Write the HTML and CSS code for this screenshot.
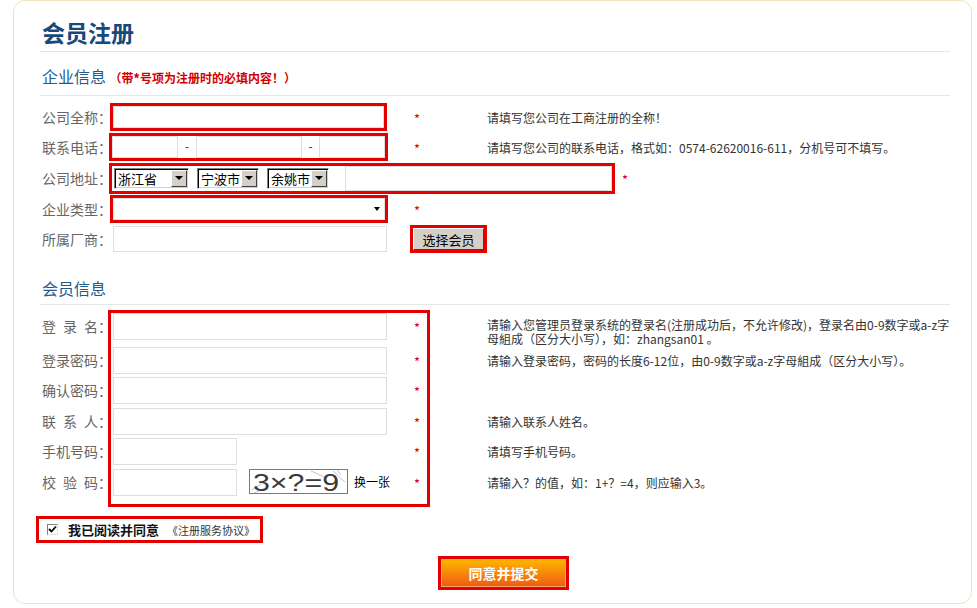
FILE: index.html
```html
<!DOCTYPE html>
<html lang="zh-CN">
<head>
    <meta charset="UTF-8" />
    <meta name="viewport" content="width=device-width, initial-scale=1.0" />
    <title>会员注册</title>
    <link rel="stylesheet" href="styles.css">
</head>
<body>

    <div class="reg-box">
        <h1 class="reg-title">会员注册</h1>

        <!-- 企业信息 -->
        <h2 class="sec-title">企业信息 <span class="sec-note">（带<b>*</b>号项为注册时的必填内容！）</span></h2>

        <div class="form-rows">
            <div class="form-row">
                <label class="lbl">公司全称：</label>
                <div class="field">
                    <div class="hl hl-name"><input type="text" class="txt grow" /></div>
                </div>
                <div class="req"><span class="star">*</span></div>
                <div class="tip">请填写您公司在工商注册的全称！</div>
            </div>

            <div class="form-row">
                <label class="lbl">联系电话：</label>
                <div class="field">
                    <div class="hl hl-phone">
                        <input type="text" class="txt ph-a" />
                        <span class="dash">-</span>
                        <input type="text" class="txt ph-b" />
                        <span class="dash dash-b">-</span>
                        <input type="text" class="txt ph-c" />
                    </div>
                </div>
                <div class="req"><span class="star">*</span></div>
                <div class="tip">请填写您公司的联系电话，格式如：0574-62620016-611，分机号可不填写。</div>
            </div>

            <div class="form-row tall">
                <label class="lbl">公司地址：</label>
                <div class="field field-wide">
                    <div class="hl hl-addr">
                        <div class="sel sel-prov"><span>浙江省</span><i class="sel-btn"></i></div>
                        <div class="sel"><span>宁波市</span><i class="sel-btn"></i></div>
                        <div class="sel"><span>余姚市</span><i class="sel-btn"></i></div>
                        <input type="text" class="txt addr" />
                    </div>
                    <span class="star">*</span>
                </div>
            </div>

            <div class="form-row">
                <label class="lbl">企业类型：</label>
                <div class="field">
                    <div class="hl hl-type"><div class="drop"><i class="drop-arrow"></i></div></div>
                </div>
                <div class="req"><span class="star">*</span></div>
            </div>

            <div class="form-row">
                <label class="lbl">所属厂商：</label>
                <div class="field">
                    <input type="text" class="txt w-long" />
                </div>
                <div class="req">
                    <div class="hl hl-btn"><button class="btn-gray">选择会员</button></div>
                </div>
            </div>
        </div>

        <!-- 会员信息 -->
        <h2 class="sec-title sec-member">会员信息</h2>

        <div class="member">
            <div class="member-labels">
                <div class="cell h-34">登&ensp;录&ensp;名：</div>
                <div class="cell h-30">登录密码：</div>
                <div class="cell h-31">确认密码：</div>
                <div class="cell h-30">联&ensp;系&ensp;人：</div>
                <div class="cell h-31">手机号码：</div>
                <div class="cell h-27">校&ensp;验&ensp;码：</div>
            </div>

            <div class="member-box">
                <div class="cell h-34"><input type="text" class="txt w-long" /><span class="star">*</span></div>
                <div class="cell h-30"><input type="password" class="txt w-long" /><span class="star">*</span></div>
                <div class="cell h-31"><input type="password" class="txt w-long" /><span class="star">*</span></div>
                <div class="cell h-30"><input type="text" class="txt w-long" /><span class="star">*</span></div>
                <div class="cell h-31"><input type="text" class="txt w-short" /><span class="star">*</span></div>
                <div class="cell h-27">
                    <input type="text" class="txt w-short" />
                    <svg class="captcha" width="99" height="25" viewBox="0 0 99 25">
                        <rect x="0.5" y="0.5" width="98" height="24" fill="#fff" stroke="#7a7a7a" />
                        <path d="M3 21 L12 15 M5 24 L16 19 M62 2 L78 9 M84 2 L96 13 M88 1 L92 6" stroke="#a8a8a8" stroke-width="0.7" fill="none" />
                        <text x="4" y="22" font-family="Liberation Sans, sans-serif" font-size="24" fill="#3a3a3a" textLength="86" lengthAdjust="spacingAndGlyphs">3×?=9</text>
                    </svg>
                    <a class="change">换一张</a>
                    <span class="star">*</span>
                </div>
            </div>

            <div class="member-tips">
                <div class="cell h-34"><div class="tip tip-2">请输入您管理员登录系统的登录名(注册成功后，不允许修改)，登录名由0-9数字或a-z字<br>母組成（区分大小写），如：zhangsan01 。</div></div>
                <div class="cell h-30 tip">请输入登录密码，密码的长度6-12位，由0-9数字或a-z字母組成（区分大小写）。</div>
                <div class="cell h-31"></div>
                <div class="cell h-30 tip">请输入联系人姓名。</div>
                <div class="cell h-31 tip">请填写手机号码。</div>
                <div class="cell h-27 tip">请输入？的值，如：1+？=4，则应输入3。</div>
            </div>
        </div>

        <label class="hl agree">
            <span class="chk">
                <svg width="9" height="9" viewBox="0 0 9 9"><path d="M1 4 L3.5 6.5 L8 1.5" stroke="#000" stroke-width="1.8" fill="none" /></svg>
            </span>
            <span class="agree-text">我已阅读并同意</span>
            <a class="agree-link">《注册服务协议》</a>
        </label>

        <div class="hl submit-hl">
            <button class="btn-submit">同意并提交</button>
        </div>
    </div>

</body>
</html>
```

FILE: styles.css
```css
body {
    margin: 0;
    background-color: #fff;
    font-family: "Noto Sans CJK SC", sans-serif;
    font-size: 12px;
    color: #333;
}

.reg-box {
    width: 959px;
    margin-left: 13px;
    padding: 0 21px 13px 26px;
    box-sizing: border-box;
    border: 1px solid #eee3bd;
    border-radius: 12px;
}

.reg-title {
    margin: 0;
    padding: 16px 0 4px 2px;
    font-size: 23px;
    line-height: 30px;
    font-weight: bold;
    color: #17497a;
    border-bottom: 1px solid #e6e6e6;
}

.sec-title {
    margin: 0;
    padding: 12px 0 5px 2px;
    font-size: 16px;
    line-height: 24px;
    font-weight: normal;
    color: #1f5c8e;
    border-bottom: 1px solid #e6e6e6;
}

.sec-note {
    font-size: 12px;
    font-weight: bold;
    color: #d40000;
}

.sec-member {
    padding-top: 22px;
    padding-bottom: 4px;
    margin-bottom: 5px;
}

.form-rows {
    margin-top: 6px;
}

.form-row {
    display: flex;
    align-items: center;
    height: 30px;
}

    .form-row.tall {
        height: 32px;
    }

.lbl {
    width: 70px;
    flex-shrink: 0;
    padding-left: 2px;
    box-sizing: border-box;
    font-size: 14px;
    color: #666;
    white-space: nowrap;
}

.field {
    width: 290px;
    flex-shrink: 0;
}

.field-wide {
    width: auto;
    display: flex;
    align-items: center;
}

.req {
    width: 87px;
    flex-shrink: 0;
}

    .req .star {
        margin-left: 7px;
    }

.star {
    display: inline-block;
    width: 20px;
    padding-top: 3px;
    text-align: center;
    color: #d00;
    font-size: 13px;
    line-height: 24px;
}

.tip {
    font-size: 12px;
    color: #333;
    white-space: nowrap;
}

/* red marks round the fields */
.hl {
    display: flex;
    box-sizing: border-box;
    border: 3px solid #e50000;
    background-color: #fff;
}

.txt {
    box-sizing: border-box;
    height: 26px;
    margin: 0;
    padding: 0 4px;
    border: 1px solid #dedede;
    background-color: #fff;
    font: 12px "Noto Sans CJK SC", sans-serif;
    outline: none;
}

.hl .txt {
    height: auto;
}

.grow {
    flex: 1;
}

.hl-name {
    width: 277px;
    height: 28px;
}

.hl-phone {
    width: 279px;
    height: 28px;
    margin-left: -1px;
}

.ph-a,
.ph-c {
    width: 66px;
}

.ph-b {
    width: 106px;
}

.dash {
    width: 18px;
    text-align: center;
    line-height: 20px;
    color: #333;
}

.dash-b {
    width: 17px;
}

.hl-addr {
    width: 506px;
    height: 31px;
    margin-left: -1px;
    padding-left: 2px;
    align-items: center;
}

    .hl-addr .addr {
        align-self: stretch;
        flex: 1;
        margin-left: 8px;
    }

.sel {
    display: flex;
    align-items: center;
    width: 62px;
    height: 21px;
    margin-right: 8px;
    box-sizing: border-box;
    border: 1px solid;
    border-color: #808080 #fff #fff #808080;
    box-shadow: inset 1px 1px 0 #000, inset -1px -1px 0 #d4d0c8;
    font-size: 13px;
    color: #000;
    padding: 0 1px 0 3px;
}

    .sel span {
        line-height: 19px;
    }

.sel-prov {
    width: 75px;
}

.sel-btn {
    display: flex;
    align-items: center;
    justify-content: center;
    width: 16px;
    height: 17px;
    margin-left: auto;
    box-sizing: border-box;
    background-color: #d4d0c8;
    border: 1px solid;
    border-color: #fff #404040 #404040 #fff;
}

    .sel-btn::after {
        content: "";
        border-left: 4px solid transparent;
        border-right: 4px solid transparent;
        border-top: 4px solid #000;
    }

.hl-type {
    width: 278px;
    height: 28px;
}

.drop {
    flex: 1;
    display: flex;
    align-items: center;
    justify-content: flex-end;
    padding-right: 4px;
    border: 1px solid #e4e4e4;
}

.drop-arrow {
    border-left: 3px solid transparent;
    border-right: 3px solid transparent;
    border-top: 4px solid #000;
}

.w-long {
    width: 274px;
    margin-left: 3px;
}

.hl-btn {
    width: 77px;
    height: 28px;
    margin-left: 10px;
}

.btn-gray {
    flex: 1;
    padding: 0;
    background-color: #d4d0c8;
    border: 1px solid;
    border-color: #fff #404040 #404040 #fff;
    font: 13px "Noto Sans CJK SC", sans-serif;
    color: #000;
}

/* member block */
.member {
    display: flex;
}

.member-labels {
    width: 70px;
    flex-shrink: 0;
    padding-top: 3px;
}

    .member-labels .cell {
        padding-left: 2px;
        font-size: 14px;
        line-height: 27px;
        color: #666;
        white-space: nowrap;
    }

.member-box {
    width: 322px;
    flex-shrink: 0;
    margin-left: -2px;
    padding-bottom: 8px;
    box-sizing: border-box;
    border: 3px solid #e50000;
}

    .member-box .cell {
        display: flex;
        align-items: flex-start;
    }

        .member-box .cell .w-long,
        .member-box .cell .w-short {
            height: 27px;
            margin-left: 2px;
        }

    .member-box .star {
        margin-left: auto;
    }

.w-short {
    width: 124px;
}

.captcha {
    flex-shrink: 0;
    margin-left: 12px;
    overflow: visible;
}

.change {
    margin-left: 6px;
    line-height: 25px;
    font-size: 12px;
    color: #000;
    white-space: nowrap;
}

.member-tips {
    margin-left: 57px;
    padding-top: 3px;
}

    .member-tips .cell {
        line-height: 27px;
    }

.tip-2 {
    padding-top: 5px;
    line-height: 14px;
}

.h-34 { height: 34px; }
.h-31 { height: 31px; }
.h-30 { height: 30px; }
.h-27 { height: 27px; }

/* agreement + submit */
.agree {
    align-items: center;
    width: 227px;
    height: 27px;
    margin: 9px 0 0 -4px;
    padding-left: 8px;
    white-space: nowrap;
}

.chk {
    display: flex;
    flex-shrink: 0;
    align-items: center;
    justify-content: center;
    width: 11px;
    height: 11px;
    box-sizing: border-box;
    border: 1px solid;
    border-color: #808080 #e0e0e0 #e0e0e0 #808080;
    background-color: #fff;
}

.agree-text {
    flex-shrink: 0;
    margin-left: 10px;
    font-size: 13px;
    font-weight: bold;
    color: #111;
}

.agree-link {
    flex-shrink: 0;
    margin-left: 8px;
    font-size: 11px;
    color: #333;
}

.submit-hl {
    width: 131px;
    height: 34px;
    margin: 13px 0 0 398px;
}

.btn-submit {
    flex: 1;
    padding: 0;
    border: 1px solid #f8a66a;
    background: linear-gradient(#ffb300, #ef5d14);
    color: #fff;
    font: bold 14px "Noto Sans CJK SC", sans-serif;
}
```
